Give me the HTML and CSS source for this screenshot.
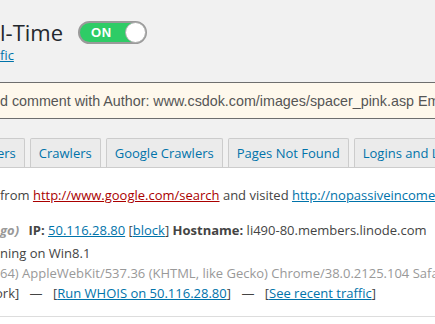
FILE: index.html
```html
<!DOCTYPE html>
<html lang="en">
<head>
    <meta charset="UTF-8">
    <title>Live Traffic</title>
    <link rel="stylesheet" href="styles.css">
</head>
<body>
    <div class="wrap">
        <div class="header">
            <h1>l-Time</h1>
            <div class="toggle on">
                <span class="toggle-label">ON</span>
                <span class="toggle-knob"></span>
            </div>
        </div>
        <a class="sub-link" href="#">fic</a>

        <div class="notice">
            <p>d comment with Author: www.csdok.com/images/spacer_pink.asp Email: example@example.com</p>
        </div>

        <div class="tabs">
            <a class="tab first" href="#">ers</a>
            <a class="tab" href="#">Crawlers</a>
            <a class="tab" href="#">Google Crawlers</a>
            <a class="tab" href="#">Pages Not Found</a>
            <a class="tab" href="#">Logins and Logouts</a>
        </div>

        <div class="traffic">
            <div class="hit">
                <p class="referer">from <a class="ref-link" href="#">http://www.google.com/search</a> and visited <a href="#">http://nopassiveincome.com/</a></p>
                <p class="ip-line"><span class="loc">go)</span> <b>IP:</b> <a href="#">50.116.28.80</a> [<a href="#">block</a>] <b>Hostname:</b> li490-80.members.linode.com</p>
                <p>ning on Win8.1</p>
                <p class="ua">64) AppleWebKit/537.36 (KHTML, like Gecko) Chrome/38.0.2125.104 Safari/537.36</p>
                <p class="actions">ork] <span class="dash">&mdash;</span> [<a href="#">Run WHOIS on 50.116.28.80</a>] <span class="dash">&mdash;</span> [<a href="#">See recent traffic</a>]</p>
            </div>
        </div>
    </div>
</body>
</html>
```

FILE: styles.css
```css
html, body {
    margin: 0;
    padding: 0;
    overflow: hidden;
}
body {
    background-color: #f1f1f1;
    font-family: "Open Sans", sans-serif;
    font-size: 13px;
    color: #444;
}
.wrap {
    white-space: nowrap;
}
.header {
    display: flex;
    align-items: center;
    gap: 15px;
    padding-top: 19px;
    height: 26px;
}
h1 {
    margin: 0;
    font-size: 22px;
    font-weight: 400;
    color: #23282d;
    line-height: 26px;
}
.toggle {
    position: relative;
    box-sizing: border-box;
    width: 69px;
    height: 23px;
    border: 2px solid #9a9a9a;
    border-radius: 12px;
    background-color: #2ecc66;
    display: flex;
    align-items: center;
}
.toggle-label {
    padding-left: 11px;
    color: #fff;
    font-family: "Liberation Sans", Arial, sans-serif;
    font-weight: bold;
    font-size: 13px;
    letter-spacing: 0.5px;
}
.toggle-knob {
    position: absolute;
    right: -1px;
    top: -1px;
    width: 19px;
    height: 19px;
    border-radius: 50%;
    background-color: #fff;
    border: 1px solid #aaa;
}
.sub-link {
    display: block;
    margin-top: 1px;
    color: #0073aa;
    line-height: 18px;
}
.notice {
    margin-top: 18px;
    background-color: #fef8ec;
    border-top: 1px solid #6e6e6e;
    border-bottom: 1px solid #6e6e6e;
    height: 35px;
    display: flex;
    align-items: center;
}
.notice p {
    margin: 0;
    font-family: "Liberation Sans", Arial, sans-serif;
    font-size: 14.3px;
    color: #555;
}
.tabs {
    display: flex;
    gap: 5px;
    margin-top: 19px;
    border-bottom: 1px solid #ccc;
}
.tab {
    display: block;
    box-sizing: border-box;
    height: 29px;
    line-height: 28px;
    padding: 0 8px;
    background-color: #ebebeb;
    border: 1px solid #ccc;
    border-bottom: none;
    border-radius: 2px 2px 0 0;
    color: #0073aa;
    text-decoration: none;
    font-size: 13px;
}
.tab.first {
    margin-left: -16px;
    padding-left: 12px;
}
.traffic {
    background-color: #fff;
    padding-top: 17px;
    padding-bottom: 10px;
}
.hit {
    border-bottom: 1px solid #ddd;
    padding-bottom: 13px;
}
.hit p {
    margin: 0;
    line-height: 20px;
}
.hit a {
    color: #0073aa;
}
.hit .ref-link {
    color: #a00;
}
.hit .referer {
    margin-bottom: 15px;
}
.hit .ip-line {
    margin-bottom: 3px;
}
.loc {
    font-weight: bold;
    font-style: italic;
    color: #999;
    margin-right: 6px;
}
.hit b {
    color: #444;
}
.ua {
    color: #999;
}
.actions {
    text-indent: -5px;
}
.dash {
    margin: 0 7px;
}
```
